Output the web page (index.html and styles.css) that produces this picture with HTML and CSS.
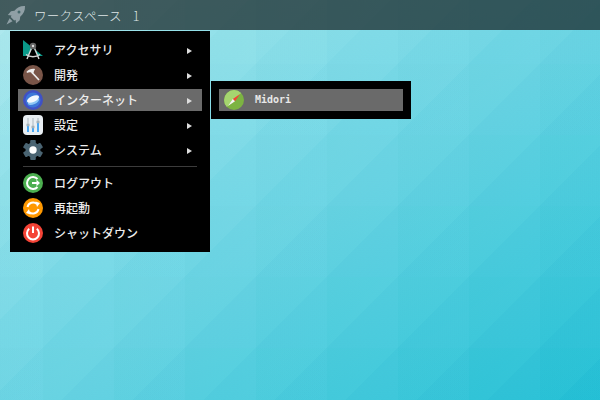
FILE: index.html
```html
<!DOCTYPE html>
<html lang="ja">
<head>
<meta charset="utf-8">
<title>ワークスペース 1</title>
<link rel="stylesheet" href="styles.css">
</head>
<body>
<header class="panel">
  <svg class="rocket" viewBox="0 0 20 20">
    <path fill="#8f9fa5" d="M19 1c-4.500-.3-8 1.500-10.500 4.800L5 6.300 1.800 10l3.700.4L4.800 12l3.400 3.400 1.400-.7.400 3.700 3.700-3.200.5-3.500C17.500 9.200 19.300 5.500 19 1z"/>
    <path fill="#8f9fa5" d="M3.600 13.300 6.500 16.200.5 19.500z"/>
    <circle cx="13" cy="7" r="1.500" fill="#46686c"/>
  </svg>
  <span class="panel-title">ワークスペース 1</span>
</header>

<nav class="menu main-menu">
  <div class="item">
    <svg class="icon" viewBox="0 0 20 20">
      <path fill="#0a9a8a" d="M0 0 20 16H0z"/>
      <path fill="#000" d="M10 7 5 16h10z"/>
      <path fill="none" stroke="#d5d5d5" stroke-width="1.400" d="M9 7 4 19M11 7l5 12M3 14.500c4 3 10 3 14 0"/>
      <circle cx="10" cy="6" r="3.200" fill="#666"/>
      <circle cx="10" cy="6" r="1.200" fill="#ddd"/>
    </svg>
    <span class="label">アクセサリ</span><span class="arrow"></span>
  </div>
  <div class="item">
    <svg class="icon" viewBox="0 0 20 20">
      <circle cx="10" cy="10" r="10" fill="#795548"/>
      <path fill="none" stroke="#eee" stroke-width="1.700" d="M9 7.500 16 15"/>
      <path fill="#eee" d="M3.500 6.800C5.500 4.500 8.500 3.300 11.500 3.800L12 4.800 10.800 6 11 7 9.500 8.700 8 7.500C6.500 7 5 7.500 4 8z"/>
    </svg>
    <span class="label">開発</span><span class="arrow"></span>
  </div>
  <div class="item active">
    <svg class="icon" viewBox="0 0 20 20">
      <circle cx="10" cy="10" r="10" fill="#3f51c5"/>
      <circle cx="10" cy="10" r="7.500" fill="#3b78d8"/>
      <ellipse cx="10.500" cy="11.500" rx="6" ry="2.800" fill="#8cc6f5" transform="rotate(-25 10.500 11.500)"/>
      <ellipse cx="10" cy="9" rx="6.500" ry="2.900" fill="#f2f8ff" transform="rotate(-25 10 9)"/>
    </svg>
    <span class="label">インターネット</span><span class="arrow"></span>
  </div>
  <div class="item">
    <svg class="icon" viewBox="0 0 20 20">
      <rect width="20" height="20" rx="4" fill="#e8eef2"/>
      <path stroke="#b6c2c9" stroke-width="1.200" d="M5 3v8M10 3v10M15 3v5"/>
      <path stroke="#2196f3" stroke-width="1.600" d="M5 11v6M10 13v4M15 8v9"/>
      <path stroke="#a3b1b9" stroke-width="2.500" d="M3.500 10h3M8.500 12h3M13.500 7h3"/>
    </svg>
    <span class="label">設定</span><span class="arrow"></span>
  </div>
  <div class="item">
    <svg class="icon" viewBox="0 0 20 20">
      <circle cx="10" cy="10" r="7.500" fill="#4a6472"/>
      <g fill="#4a6472">
        <rect x="7.200" width="5.600" height="20" rx="1"/>
        <rect x="7.200" width="5.600" height="20" rx="1" transform="rotate(60 10 10)"/>
        <rect x="7.200" width="5.600" height="20" rx="1" transform="rotate(120 10 10)"/>
      </g>
      <circle cx="10" cy="10" r="3.700" fill="#fff"/>
    </svg>
    <span class="label">システム</span><span class="arrow"></span>
  </div>
  <hr class="separator">
  <div class="item">
    <svg class="icon" viewBox="0 0 20 20">
      <circle cx="10" cy="10" r="10" fill="#4caf50"/>
      <path fill="none" stroke="#fff" stroke-width="2" d="M14.500 6A6 6 0 1 0 14.500 14"/>
      <path fill="#fff" d="M9 9h4.500V6.800L17 10l-3.500 3.200V11H9z"/>
    </svg>
    <span class="label">ログアウト</span>
  </div>
  <div class="item">
    <svg class="icon" viewBox="0 0 20 20">
      <circle cx="10" cy="10" r="10" fill="#ff9800"/>
      <path fill="none" stroke="#fff" stroke-width="2" d="M4.500 9A5.700 5.700 0 0 1 14 6M15.500 11A5.700 5.700 0 0 1 6 14"/>
      <path fill="#fff" d="M12.500 3.500 17 5 14 9zM7.500 16.500 3 15 6 11z"/>
    </svg>
    <span class="label">再起動</span>
  </div>
  <div class="item">
    <svg class="icon" viewBox="0 0 20 20">
      <circle cx="10" cy="10" r="10" fill="#f44336"/>
      <path fill="none" stroke="#fff" stroke-width="2" d="M6.200 5.800a6 6 0 1 0 7.600 0"/>
      <path stroke="#fff" stroke-width="2" d="M10 3.500v6.500"/>
    </svg>
    <span class="label">シャットダウン</span>
  </div>
</nav>

<nav class="menu sub-menu">
  <div class="item active">
    <svg class="icon" viewBox="0 0 20 20">
      <circle cx="10" cy="10" r="10" fill="#7cb342"/>
      <path fill="#a5d56f" d="M2.930 17.070A10 10 0 0 1 17.070 2.930z"/>
      <path fill="#f44336" d="M16 4 8.800 9 11 11.200z"/>
      <path fill="#f5f5f5" d="M4 16 8.800 9 11 11.200z"/>
    </svg>
    <span class="label mono">Midori</span>
  </div>
</nav>
</body>
</html>
```
FILE: styles.css
```css
* { box-sizing: border-box; }
html, body { margin: 0; height: 100%; }
body {
  position: relative;
  width: 600px;
  height: 400px;
  overflow: hidden;
  font-family: "Noto Sans CJK JP", "Noto Sans", sans-serif;
  color: #ececec;
  background-color: #6cd7e5;
  background-image:
    linear-gradient(135deg,
      rgba(255, 255, 255, 0.012) 50%,
      rgba(0, 120, 150, 0.022) 50%),
    linear-gradient(90deg, rgba(0, 110, 140, 0.03), rgba(255, 255, 255, 0.03)),
    linear-gradient(180deg, rgba(0, 110, 140, 0.025), rgba(255, 255, 255, 0.025)),
    linear-gradient(to bottom right, #b4edf2, #6cd7e5 50%, #1cc0d6);
  background-size: 71px 71px, 71px 100%, 100% 71px, 100% 100%;
  background-position: 43px 64px, 43px 0, 0 64px, 0 0;
}
.panel {
  height: 30px;
  padding-left: 6px;
  display: flex;
  align-items: center;
  gap: 8px;
  background: rgba(24, 36, 38, 0.72);
}
.rocket { width: 20px; height: 20px; }
.panel-title {
  font-size: 12.5px;
  font-weight: 300;
  letter-spacing: 0.3px;
  word-spacing: 8px;
  color: #dfe6e7;
}
.menu {
  position: absolute;
  background: #000;
  padding: 8px;
}
.main-menu { left: 10px; top: 31px; width: 200px; height: 221px; }
.sub-menu { left: 211px; top: 81px; width: 200px; height: 38px; }
.item {
  height: 22px;
  padding-left: 5px;
  padding-right: 10px;
  margin-bottom: 3px;
  display: flex;
  align-items: center;
  font-size: 12px;
  font-weight: 500;
}
.item.active { background: #6a6a6a; }
.icon { width: 20px; height: 20px; flex: none; }
.label { margin-left: 11px; flex: 1; line-height: 20px; }
.mono {
  font-family: "DejaVu Sans Mono", monospace;
  font-size: 10px;
  font-weight: 700;
  color: #e8e8e8;
}
.arrow {
  width: 0;
  height: 0;
  margin-top: 1px;
  border-left: 5px solid #ddd;
  border-top: 3px solid transparent;
  border-bottom: 3px solid transparent;
}
.separator {
  border: 0;
  height: 1px;
  margin: 5px 5px 5px;
  background: #3c3c3c;
}
```
